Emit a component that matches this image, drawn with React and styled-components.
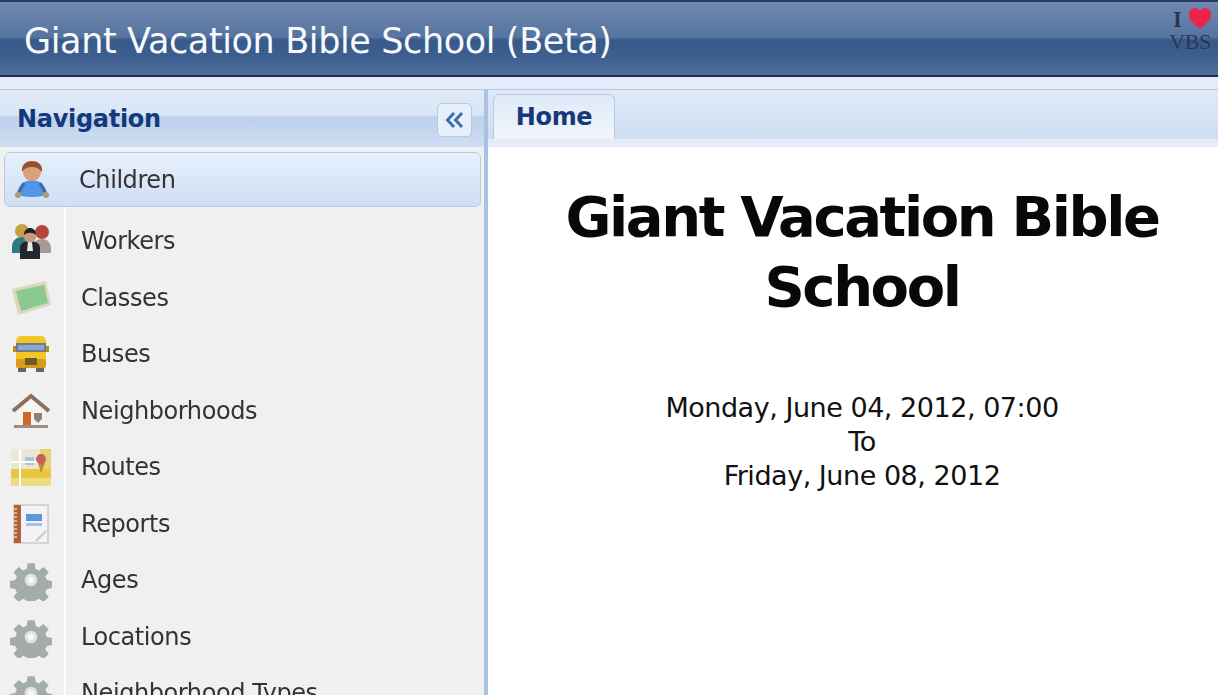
import React from "react";
import styled, { createGlobalStyle } from "styled-components";

const GlobalStyle = createGlobalStyle`
  html, body {
    margin: 0;
    padding: 0;
    height: 100%;
    overflow: hidden;
    background: #fff;
    font-family: "DejaVu Sans", sans-serif;
  }
`;

const Page = styled.div`
  width: 1218px;
  height: 695px;
  display: flex;
  flex-direction: column;
  overflow: hidden;
  filter: blur(0.45px);
`;

const Header = styled.header`
  height: 73px;
  flex: none;
  box-sizing: content-box;
  border-top: 2px solid #2b3c5e;
  border-bottom: 2px solid #1d2c4c;
  background: linear-gradient(
    to bottom,
    #7189b1 0%,
    #56749f 48%,
    #385a8a 52%,
    #3d5f8f 75%,
    #4f6f9e 100%
  );
  display: flex;
  align-items: center;
  justify-content: space-between;
  padding: 0 6px 0 24px;
`;

const Title = styled.h1`
  margin: 4px 0 0;
  font-family: "DejaVu Sans", sans-serif;
  font-weight: 400;
  font-size: 35px;
  letter-spacing: -0.38px;
  color: #f7f9fc;
`;

const Badge = styled.div`
  width: 44px;
  height: 48px;
  margin-top: -14px;
  font-family: "Liberation Serif", serif;
  color: #2c3654;
  line-height: 1;
`;

const BadgeTop = styled.div`
  display: flex;
  align-items: center;
  gap: 6px;
  height: 23px;
  font-size: 23px;
  font-weight: 700;
  padding-left: 5px;
`;

const BadgeBottom = styled.div`
  font-size: 22px;
  letter-spacing: -0.5px;
  color: #2c3654;
  text-align: center;
`;

const Strip = styled.div`
  height: 12px;
  flex: none;
  background: #e3ecf8;
  border-bottom: 1px solid #b6c9e2;
`;

const Body = styled.div`
  flex: 1;
  display: flex;
  min-height: 0;
`;

const Sidebar = styled.aside`
  width: 484px;
  flex: none;
  display: flex;
  flex-direction: column;
  background: #f0f0f0;
  overflow: hidden;
`;

const PanelHeader = styled.div`
  height: 57px;
  flex: none;
  display: flex;
  align-items: center;
  justify-content: space-between;
  padding: 0 12px 0 17px;
  background: linear-gradient(to bottom, #e0eaf8 0%, #d9e5f6 44%, #bdd1ec 48%, #cfdef2 100%);
`;

const PanelTitle = styled.span`
  font-weight: 700;
  font-size: 24px;
  letter-spacing: -0.3px;
  color: #14397a;
`;

const CollapseButton = styled.button`
  width: 35px;
  height: 34px;
  padding: 0;
  margin-top: 2px;
  display: flex;
  align-items: center;
  justify-content: center;
  background: #e6effa;
  border: 1px solid #b3c8e3;
  border-radius: 5px;
`;

const NavList = styled.ul`
  list-style: none;
  margin: 0;
  padding: 5px 0 0;
  flex: 1;
  background: linear-gradient(to right, #f0f0f0 64px, #fff 64px, #fff 66px, #f0f0f0 66px) no-repeat
    bottom / 100% calc(100% - 50px);
`;

const NavItem = styled.li`
  box-sizing: border-box;
  display: flex;
  align-items: center;
  height: ${(p) => (p.$active ? "55px" : "56.5px")};
  margin: ${(p) => (p.$active ? "0 3px 6px 4px" : "0")};
  border: ${(p) => (p.$active ? "1px solid #b5cbe8" : "none")};
  border-radius: ${(p) => (p.$active ? "6px" : "0")};
  background: ${(p) =>
    p.$active ? "linear-gradient(to bottom, #e7f0fc 0%, #dbe7f8 50%, #cfdff5 100%)" : "transparent"};
  padding-left: ${(p) => (p.$active ? "5px" : "9px")};
`;

const NavIcon = styled.span`
  width: 44px;
  height: 44px;
  flex: none;
  display: flex;
  align-items: center;
  justify-content: center;
`;

const NavLabel = styled.span`
  margin-left: ${(p) => (p.$active ? "25px" : "28px")};
  font-size: 24px;
  letter-spacing: -0.42px;
  color: #333;
  white-space: nowrap;
`;

const Splitter = styled.div`
  width: 4px;
  flex: none;
  background: #a9c2e2;
`;

const Main = styled.main`
  flex: 1;
  display: flex;
  flex-direction: column;
  min-width: 0;
`;

const TabBar = styled.div`
  height: 57px;
  flex: none;
  box-sizing: border-box;
  display: flex;
  align-items: flex-end;
  padding-left: 5px;
  background: linear-gradient(to bottom, #e0e9f7, #cfdef2);
  border-bottom: 8px solid #e3ecf8;
`;

const Tab = styled.div`
  box-sizing: border-box;
  width: 122px;
  height: 45px;
  display: flex;
  align-items: center;
  justify-content: center;
  font-weight: 700;
  font-size: 24px;
  letter-spacing: -0.3px;
  color: #15397a;
  background: linear-gradient(to bottom, #dfe9f8, #f2f6fc);
  border: 1px solid #b5cae6;
  border-bottom: none;
  border-radius: 6px 6px 0 0;
`;

const Content = styled.div`
  flex: 1;
  background: #fff;
  text-align: center;
  color: #111;
  padding: 35px 0 0 18px;
`;

const Heading = styled.h2`
  margin: 0 auto;
  width: 640px;
  font-family: "DejaVu Sans", sans-serif;
  font-weight: 700;
  font-size: 56px;
  line-height: 70px;
  letter-spacing: -2.4px;
  color: #080808;
`;

const Dates = styled.div`
  margin-top: 69px;
  font-size: 27px;
  line-height: 34px;
  letter-spacing: -0.47px;
`;

const ChevronsIcon = () => (
  <svg width="22" height="18" viewBox="0 0 22 18" fill="none" stroke="#3f6cab" strokeWidth="3">
    <path d="M10 2 3.5 9 10 16" />
    <path d="M18 2 11.5 9 18 16" />
  </svg>
);

const HeartIcon = ({ size = 24 }) => (
  <svg width={size} height={size} viewBox="0 0 24 24">
    <path
      d="M12 22C6 17 1 13 1 7.500C1 3.500 4 1 7 1c2 0 4 1 5 3.500C13 2 15 1 17 1c3 0 6 2.500 6 6.500C23 13 18 17 12 22Z"
      fill="#ec2449"
    />
  </svg>
);

const ChildIcon = () => (
  <svg width="42" height="40" viewBox="0 0 42 40">
    <path d="M6 34c1-9 8-14 15-14s14 5 15 14c-4 4-26 4-30 0Z" fill="#4f97e6" />
    <path d="M7 34 13 23M35 34 29 23" stroke="#476a9b" strokeWidth="3" />
    <circle cx="7" cy="35" r="3" fill="#b49a6b" />
    <circle cx="35" cy="35" r="3" fill="#b49a6b" />
    <circle cx="21" cy="12" r="9" fill="#d9a07c" />
    <path d="M11 12C10 4 16 1 21 1s11 3 10 11c-3-4-7-5-10-5s-8 1-10 5Z" fill="#96512a" />
  </svg>
);

const WorkersIcon = () => (
  <svg width="42" height="40" viewBox="0 0 42 40">
    <circle cx="12" cy="10" r="7" fill="#c9a23f" />
    <path d="M2 26c0-7 5-10 10-10s10 3 10 10v6H2Z" fill="#2d7a86" />
    <circle cx="32" cy="11" r="7" fill="#b5443a" />
    <path d="M22 28c0-7 5-10 10-10s9 3 9 10v4H22Z" fill="#a89a96" />
    <path d="M10 38V27c0-5 5-7 10-7s10 2 10 7v11Z" fill="#23262c" />
    <path d="M18 21h4l1 9h-6Z" fill="#e8e8e8" />
    <circle cx="20" cy="15" r="6.500" fill="#c99c80" />
    <path d="M14 14c0-5 3-7 6-7s6 2 6 7c-3-3-9-3-12 0Z" fill="#1d1f24" />
  </svg>
);

const BoardIcon = () => (
  <svg width="42" height="36" viewBox="0 0 42 36">
    <path d="M2 9 36 1l5 24-33 10Z" fill="#dcd6c0" />
    <path d="M6 11 34 5l4 18-27 8Z" fill="#8cc98f" />
  </svg>
);

const BusIcon = () => (
  <svg width="36" height="40" viewBox="0 0 36 40">
    <rect x="5" y="33" width="8" height="5" fill="#5d6670" />
    <rect x="23" y="33" width="8" height="5" fill="#5d6670" />
    <rect x="3" y="2" width="30" height="32" rx="5" fill="#f3c526" />
    <rect x="3" y="9" width="30" height="9" fill="#6c7a92" />
    <rect x="5" y="11" width="26" height="5" fill="#8fa7c4" />
    <rect x="3" y="25" width="30" height="9" rx="2" fill="#d79a1a" />
    <rect x="12" y="24" width="12" height="7" fill="#6a5a2e" />
    <rect x="0" y="12" width="3" height="6" fill="#b98b1e" />
    <rect x="33" y="12" width="3" height="6" fill="#b98b1e" />
  </svg>
);

const HouseIcon = () => (
  <svg width="40" height="38" viewBox="0 0 40 38">
    <path d="M7 17 20 6l13 11v16H7Z" fill="#f8f5f1" />
    <path d="M2 19 20 4l18 15" fill="none" stroke="#8a6f60" strokeWidth="4" />
    <rect x="12" y="20" width="8" height="13" fill="#cf6a26" />
    <path d="M23 21h8v6l-4 4-4-4Z" fill="#8f8079" />
    <rect x="3" y="33" width="34" height="3" fill="#9b8d86" />
  </svg>
);

const MapIcon = () => (
  <svg width="42" height="40" viewBox="0 0 42 40">
    <rect x="1" y="2" width="40" height="37" rx="3" fill="#ece7d2" />
    <rect x="1" y="22" width="40" height="9" fill="#e9c63f" />
    <rect x="1" y="31" width="40" height="8" fill="#efdc82" />
    <rect x="30" y="2" width="11" height="20" fill="#e6d376" />
    <rect x="15" y="10" width="9" height="8" fill="#a9c3de" />
    <rect x="9" y="2" width="2" height="37" fill="#fff" />
    <path d="M1 15h28" stroke="#fff" strokeWidth="2" />
    <path d="M31 26 28 16h7Z" fill="#b98d2e" />
    <circle cx="31" cy="12" r="5" fill="#cc5f5c" />
  </svg>
);

const ReportIcon = () => (
  <svg width="38" height="40" viewBox="0 0 38 40">
    <rect x="2" y="1" width="34" height="38" fill="#f3f3f5" stroke="#b7b7bb" />
    <rect x="2" y="1" width="7" height="38" fill="#b4623a" />
    <path
      d="M1 5h4M1 9h4M1 13h4M1 17h4M1 21h4M1 25h4M1 29h4M1 33h4"
      stroke="#e6cdbd"
      strokeWidth="1.500"
    />
    <rect x="14" y="10" width="16" height="7" fill="#5f97dd" />
    <rect x="14" y="19" width="16" height="3" fill="#a4c4ea" />
    <path d="M24 37 34 27" stroke="#c9c9cd" strokeWidth="2" />
  </svg>
);

const GearIcon = () => (
  <svg width="42" height="42" viewBox="0 0 40 40">
    <path
      d="M16 1h8l1 6 4 2 5-4 6 6-4 5 2 4 6 1v8l-6 1-2 4 4 5-6 6-5-4-4 2-1 6h-8l-1-6-4-2-5 4-6-6 4-5-2-4-6-1v-8l6-1 2-4-4-5 6-6 5 4 4-2Z"
      transform="translate(3.300 3.300) scale(.84)"
      fill="#a3acab"
    />
    <circle cx="20" cy="20" r="6" fill="#dfe3e3" />
    <circle cx="20" cy="20" r="3" fill="#f7f8f8" />
  </svg>
);

const navItems = [
  { label: "Children", icon: <ChildIcon />, active: true },
  { label: "Workers", icon: <WorkersIcon /> },
  { label: "Classes", icon: <BoardIcon /> },
  { label: "Buses", icon: <BusIcon /> },
  { label: "Neighborhoods", icon: <HouseIcon /> },
  { label: "Routes", icon: <MapIcon /> },
  { label: "Reports", icon: <ReportIcon /> },
  { label: "Ages", icon: <GearIcon /> },
  { label: "Locations", icon: <GearIcon /> },
  { label: "Neighborhood Types", icon: <GearIcon /> },
];

export default function App() {
  return (
    <Page>
      <GlobalStyle />
      <Header>
        <Title>Giant Vacation Bible School (Beta)</Title>
        <Badge>
          <BadgeTop>
            I <HeartIcon />
          </BadgeTop>
          <BadgeBottom>VBS</BadgeBottom>
        </Badge>
      </Header>
      <Strip />
      <Body>
        <Sidebar>
          <PanelHeader>
            <PanelTitle>Navigation</PanelTitle>
            <CollapseButton aria-label="Collapse">
              <ChevronsIcon />
            </CollapseButton>
          </PanelHeader>
          <NavList>
            {navItems.map((item) => (
              <NavItem key={item.label} $active={item.active}>
                <NavIcon>{item.icon}</NavIcon>
                <NavLabel $active={item.active}>{item.label}</NavLabel>
              </NavItem>
            ))}
          </NavList>
        </Sidebar>
        <Splitter />
        <Main>
          <TabBar>
            <Tab>Home</Tab>
          </TabBar>
          <Content>
            <Heading>Giant Vacation Bible School</Heading>
            <Dates>
              Monday, June 04, 2012, 07:00
              <br />
              To
              <br />
              Friday, June 08, 2012
            </Dates>
          </Content>
        </Main>
      </Body>
    </Page>
  );
}
